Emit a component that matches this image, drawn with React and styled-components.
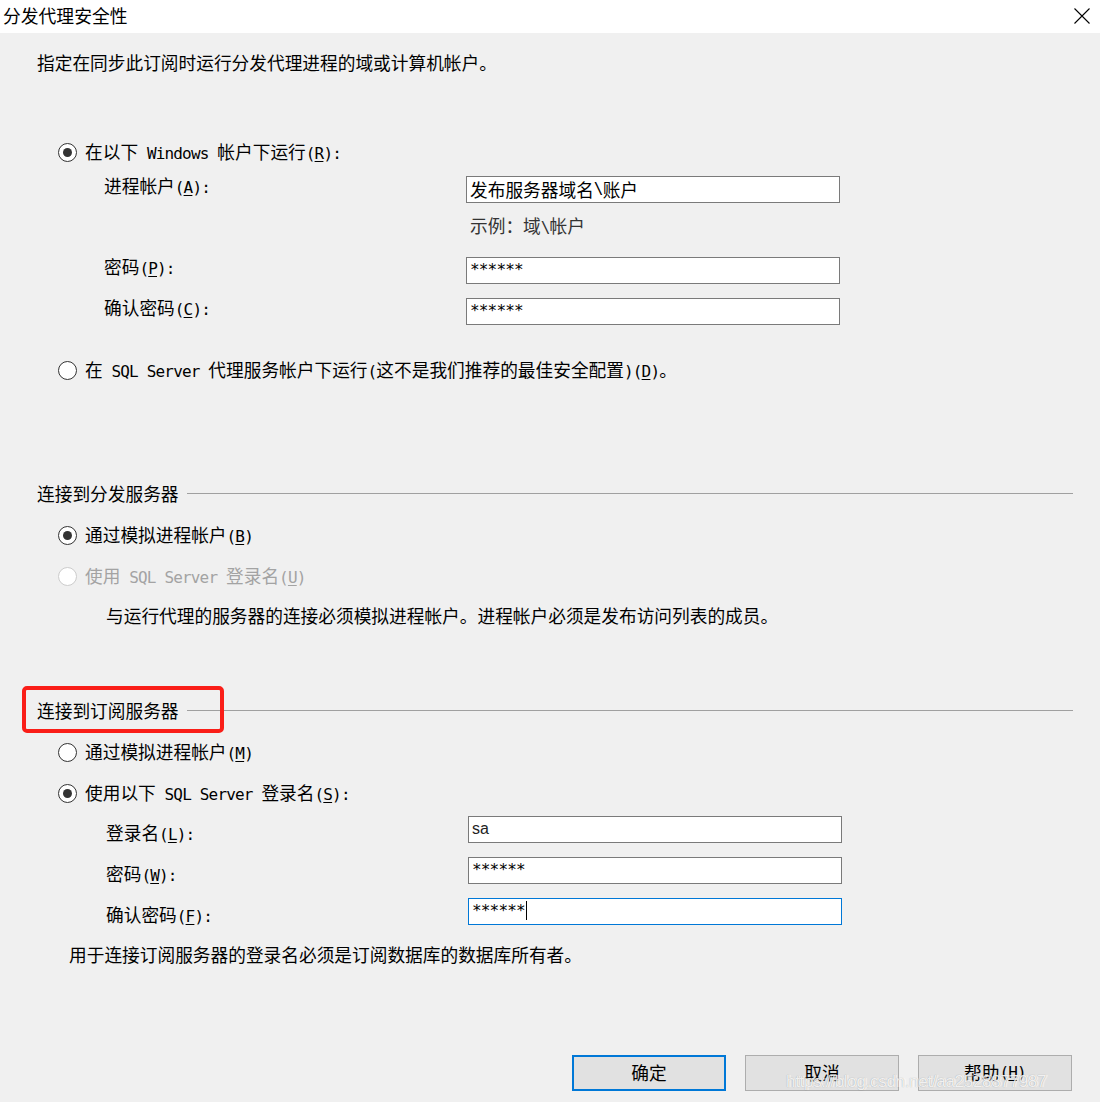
import React from 'react';
import styled, { createGlobalStyle } from 'styled-components';

const GlobalStyle = createGlobalStyle`
  html, body {
    margin: 0;
    padding: 0;
    background: #f0f0f0;
  }
`;

const Window = styled.div`
  position: relative;
  width: 1100px;
  height: 1102px;
  background: #f0f0f0;
  color: #000;
  font-family: "Noto Sans CJK SC", "Liberation Sans", sans-serif;
  font-size: 17.7px;
  overflow: hidden;
`;

const TitleBar = styled.div`
  height: 33px;
  background: #fff;
  display: flex;
  align-items: center;
  justify-content: space-between;
  padding: 0 10px 3px 3px;
  box-sizing: border-box;
  font-size: 17.8px;
`;

const CloseButton = styled.svg`
  width: 16px;
  height: 16px;
  margin-top: 2px;
`;

const Body = styled.div`
  display: flex;
  flex-direction: column;
  padding: 17px 27px 0 37px;
`;

const Line = styled.div`
  line-height: 24px;
  height: 24px;
  white-space: nowrap;
  margin-top: ${p => p.$mt || 0}px;
  margin-left: ${p => p.$ml || 0}px;
  color: ${p => p.$color || '#000'};
`;

const RadioRow = styled.div`
  display: flex;
  align-items: center;
  gap: 8px;
  height: 24px;
  line-height: 24px;
  white-space: nowrap;
  margin-top: ${p => p.$mt}px;
  margin-left: 21px;
  color: ${p => (p.$disabled ? '#a3a3a3' : '#000')};
`;

const RadioCircle = styled.span`
  flex: none;
  width: 19px;
  height: 19px;
  box-sizing: border-box;
  border-radius: 50%;
  border: 1px solid ${p => (p.$disabled ? '#cccccc' : '#333')};
  background: #fff;
  display: flex;
  align-items: center;
  justify-content: center;

  &::after {
    content: '';
    width: 9px;
    height: 9px;
    border-radius: 50%;
    background: #333;
    display: ${p => (p.$checked ? 'block' : 'none')};
  }
`;

const FieldRow = styled.div`
  display: grid;
  grid-template-columns: 362px 374px;
  align-items: start;
  height: 27px;
  margin-top: ${p => p.$mt}px;
  padding-left: ${p => p.$indent}px;
`;

const FieldLabel = styled.div`
  height: 27px;
  line-height: ${p => p.$lh}px;
  white-space: nowrap;
`;

const Box = styled.div`
  height: 27px;
  box-sizing: border-box;
  border: 1px solid ${p => (p.$focused ? '#0078d7' : '#7a7a7a')};
  background: #fff;
  padding: 0 3px 2px;
  display: flex;
  align-items: center;
  white-space: nowrap;
`;

const Caret = styled.span`
  display: inline-block;
  width: 1px;
  height: 19px;
  background: #000;
  margin-left: 1px;
`;

const Plain = styled.span`
  font-family: "Liberation Sans", Arial, sans-serif;
  font-size: 16px;
  color: #222;
`;

// half-width latin, as SimSun draws it
const Mono = styled.span`
  font-family: "DejaVu Sans Mono", "Liberation Mono", monospace;
  font-size: 16px;
  letter-spacing: -0.83px;
  white-space: pre;
`;

const Key = styled.span`
  text-decoration: underline;
  text-underline-offset: 2px;
`;

const SectionHeader = styled.div`
  position: relative;
  display: flex;
  align-items: center;
  gap: 8px;
  height: 24px;
  line-height: 24px;
  margin-top: ${p => p.$mt}px;

  &::after {
    content: '';
    flex: 1;
    height: 1px;
    background: #a0a0a0;
  }
`;

const Annotation = styled.div`
  position: absolute;
  left: -15px;
  top: -12px;
  width: 202px;
  height: 47px;
  box-sizing: border-box;
  border: 4px solid #fa1e18;
  border-radius: 5px;
`;

const ButtonRow = styled.div`
  display: flex;
  justify-content: flex-end;
  gap: 19px;
  margin-top: 89px;
  margin-right: 1px;
`;

const Button = styled.button`
  width: 154px;
  height: 36px;
  box-sizing: border-box;
  padding: 0 0 2px;
  background: #e1e1e1;
  border: ${p => (p.$primary ? '2px solid #0078d7' : '1px solid #adadad')};
  color: #000;
  font-family: inherit;
  font-size: 17.7px;
  display: flex;
  align-items: center;
  justify-content: center;
`;

const Watermark = styled.div`
  position: absolute;
  left: 786px;
  top: 1072px;
  font-family: "Liberation Sans", Arial, sans-serif;
  font-size: 17px;
  color: rgba(255, 255, 255, 0.85);
  text-shadow: 0 0 1px rgba(0, 0, 0, 0.35), 2px 0 0 rgba(255, 255, 255, 0.5);
  letter-spacing: -0.3px;
  pointer-events: none;
`;

// ASCII runs are half-width, "&X" marks an accelerator key
function T({ children }) {
  const runs = String(children).split(/([\x20-\x7e]+)/);
  return (
    <>
      {runs.map((run, i) => {
        if (!run) return null;
        if (/^[\x20-\x7e]+$/.test(run)) {
          const pieces = run.split(/&(.)/);
          return (
            <Mono key={i}>
              {pieces.map((p, j) => (j % 2 ? <Key key={j}>{p}</Key> : p))}
            </Mono>
          );
        }
        return <React.Fragment key={i}>{run}</React.Fragment>;
      })}
    </>
  );
}

function Radio({ checked, disabled, mt, children }) {
  return (
    <RadioRow $mt={mt} $disabled={disabled}>
      <RadioCircle $checked={checked} $disabled={disabled} />
      <span>
        <T>{children}</T>
      </span>
    </RadioRow>
  );
}

function Field({ label, mt, indent, lh, focused, children }) {
  return (
    <FieldRow $mt={mt} $indent={indent}>
      <FieldLabel $lh={lh}>
        <T>{label}</T>
      </FieldLabel>
      <Box $focused={focused}>{children}</Box>
    </FieldRow>
  );
}

export default function App() {
  return (
    <Window>
      <GlobalStyle />
      <TitleBar>
        <span>分发代理安全性</span>
        <CloseButton viewBox="0 0 16 16">
          <path d="M0.5 0.5 L15.5 15.5 M15.5 0.5 L0.5 15.5" stroke="#000" strokeWidth="1.1" fill="none" />
        </CloseButton>
      </TitleBar>

      <Body>
        <Line>指定在同步此订阅时运行分发代理进程的域或计算机帐户。</Line>

        <Radio checked mt={66}>在以下 Windows 帐户下运行(&R):</Radio>
        <Field label="进程帐户(&A):" mt={12} indent={67} lh={18}>
          <T>发布服务器域名\账户</T>
        </Field>
        <Line $mt={10} $ml={433} $color="#333">
          <T>示例：域\帐户</T>
        </Line>
        <Field label="密码(&P):" mt={20} indent={67} lh={18}>
          <Mono>******</Mono>
        </Field>
        <Field label="确认密码(&C):" mt={14} indent={67} lh={18}>
          <Mono>******</Mono>
        </Field>
        <Radio mt={33}>在 SQL Server 代理服务帐户下运行(这不是我们推荐的最佳安全配置)(&D)。</Radio>

        <SectionHeader $mt={99}>连接到分发服务器</SectionHeader>
        <Radio checked mt={18}>通过模拟进程帐户(&B)</Radio>
        <Radio disabled mt={17}>使用 SQL Server 登录名(&U)</Radio>
        <Line $mt={15} $ml={69}>与运行代理的服务器的连接必须模拟进程帐户。进程帐户必须是发布访问列表的成员。</Line>

        <SectionHeader $mt={71}>
          连接到订阅服务器
          <Annotation />
        </SectionHeader>
        <Radio mt={18}>通过模拟进程帐户(&M)</Radio>
        <Radio checked mt={17}>使用以下 SQL Server 登录名(&S):</Radio>
        <Field label="登录名(&L):" mt={11} indent={69} lh={33}>
          <Plain>sa</Plain>
        </Field>
        <Field label="密码(&W):" mt={14} indent={69} lh={33}>
          <Mono>******</Mono>
        </Field>
        <Field label="确认密码(&F):" mt={14} indent={69} lh={33} focused>
          <Mono>******</Mono>
          <Caret />
        </Field>
        <Line $mt={17} $ml={32}>用于连接订阅服务器的登录名必须是订阅数据库的数据库所有者。</Line>

        <ButtonRow>
          <Button $primary>确定</Button>
          <Button>取消</Button>
          <Button>
            <T>帮助(&H)</T>
          </Button>
        </ButtonRow>
      </Body>

      <Watermark>https://blog.csdn.net/aa2528877987</Watermark>
    </Window>
  );
}
